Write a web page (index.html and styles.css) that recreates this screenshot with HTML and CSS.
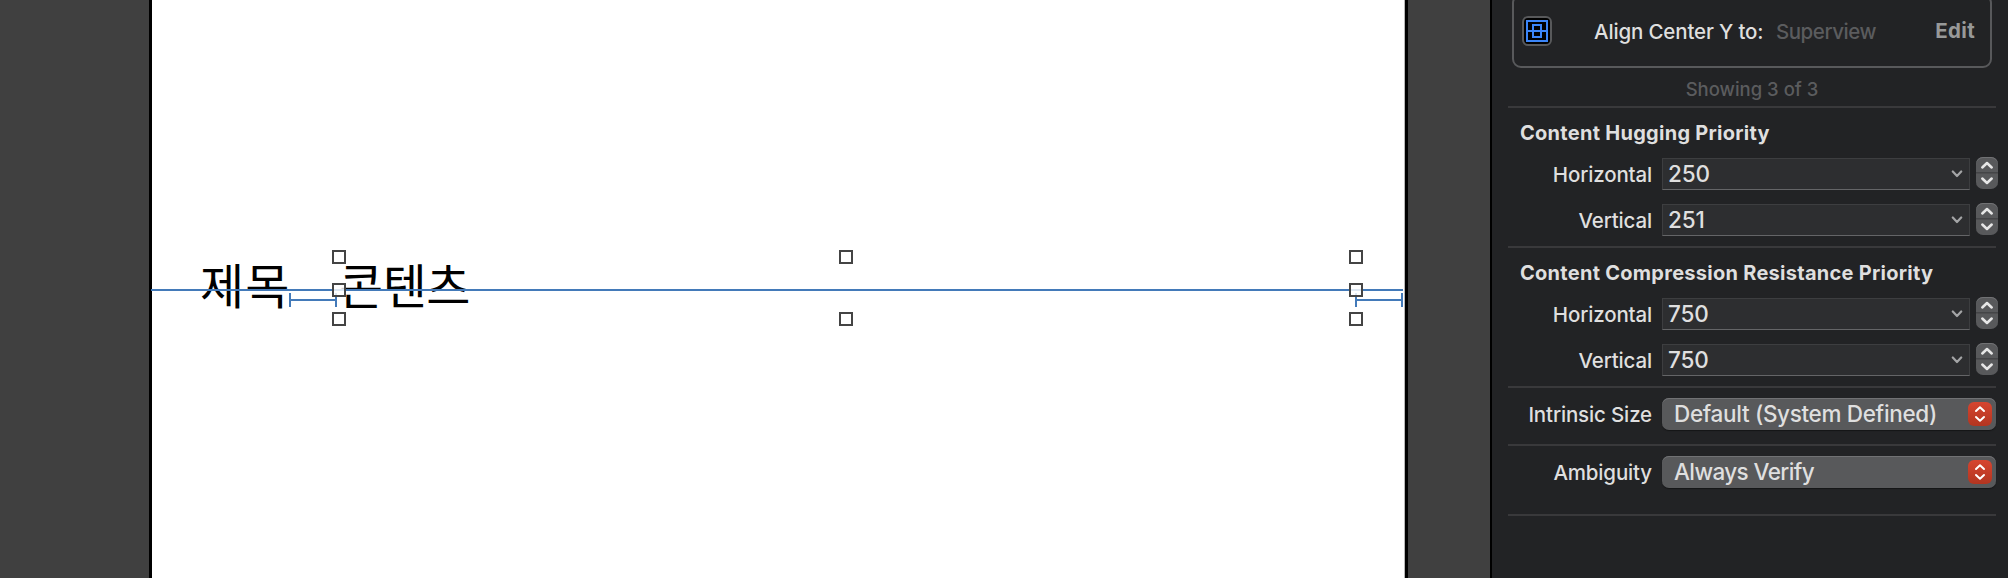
FILE: index.html
```html
<!DOCTYPE html>
<html lang="ko">
<head>
<meta charset="utf-8">
<title>Size Inspector</title>
<link rel="stylesheet" href="styles.css">
</head>
<body>
<svg class="defs" width="0" height="0">
  <symbol id="stepper" viewBox="0 0 22 32">
    <path d="M0 15.700h22" stroke="#444547" stroke-width="1.600"/>
    <path d="M6.300 10.500 11 6l4.700 4.500M6.300 21.500 11 26l4.700-4.500" fill="none" stroke="#e6e6e6" stroke-width="2.500" stroke-linecap="round" stroke-linejoin="round"/>
  </symbol>
  <symbol id="chevron" viewBox="0 0 12 8">
    <path d="M1.800 1.500 6 6l4.200-4.500" fill="none" stroke="#a4a5a6" stroke-width="2.200" stroke-linecap="round" stroke-linejoin="round"/>
  </symbol>
  <symbol id="updown" viewBox="0 0 24 24">
    <path d="M8 9 12 5.200 16 9M8 15l4 3.800L16 15" fill="none" stroke="#fff" stroke-width="2" stroke-linecap="round" stroke-linejoin="round"/>
  </symbol>
</svg>
<div class="app">
  <main class="canvas">
    <div class="device">
      <span class="label title">제목</span>
      <span class="label content">콘텐츠</span>
      <i class="guide"></i>
      <i class="spacing s1"></i>
      <i class="spacing s2"></i>
      <i class="handle left top"></i><i class="handle left middle"></i><i class="handle left bottom"></i>
      <i class="handle center top"></i><i class="handle center bottom"></i>
      <i class="handle right top"></i><i class="handle right middle"></i><i class="handle right bottom"></i>
    </div>
  </main>
  <aside class="inspector">
    <div class="constraint">
      <svg class="align-icon" viewBox="0 0 30 30" width="30" height="30">
        <rect x="1" y="1" width="28" height="28" rx="5" fill="#000" stroke="#58595b" stroke-width="2"/>
        <path d="M5 5h20v20H5zM11 9h8v12h-8zM5 15h20" fill="none" stroke="#3b85f7" stroke-width="2"/>
      </svg>
      <span class="name">Align Center Y to:</span>
      <span class="target">Superview</span>
      <span class="edit">Edit</span>
    </div>
    <div class="showing"><span>Showing 3 of 3</span></div>
    <section class="group">
      <h2>Content Hugging Priority</h2>
      <div class="row"><label>Horizontal</label><div class="field"><span>250</span><svg width="12" height="8"><use href="#chevron"/></svg></div><svg class="stepper"><use href="#stepper"/></svg></div>
      <div class="row"><label>Vertical</label><div class="field"><span>251</span><svg width="12" height="8"><use href="#chevron"/></svg></div><svg class="stepper"><use href="#stepper"/></svg></div>
    </section>
    <section class="group">
      <h2>Content Compression Resistance Priority</h2>
      <div class="row"><label>Horizontal</label><div class="field"><span>750</span><svg width="12" height="8"><use href="#chevron"/></svg></div><svg class="stepper"><use href="#stepper"/></svg></div>
      <div class="row"><label>Vertical</label><div class="field"><span>750</span><svg width="12" height="8"><use href="#chevron"/></svg></div><svg class="stepper"><use href="#stepper"/></svg></div>
    </section>
    <section class="group single">
      <div class="row"><label>Intrinsic Size</label><div class="popup"><span class="wide">Default (System Defined)</span><svg class="knob"><use href="#updown"/></svg></div></div>
    </section>
    <section class="group single ambiguity">
      <div class="row"><label>Ambiguity</label><div class="popup"><span>Always Verify</span><svg class="knob"><use href="#updown"/></svg></div></div>
    </section>
    <div class="end"></div>
  </aside>
</div>
</body>
</html>
```
FILE: styles.css
```css
* { box-sizing: border-box; }
html, body { height: 578px; overflow: hidden; }
body { margin: 0; background: #404040; font-family: Inter, "Liberation Sans", sans-serif; }
.defs { position: absolute; }
.app { display: flex; width: 2008px; height: 578px; overflow: hidden; }
.canvas { width: 1490px; padding-left: 149px; background: #404040; }
.device { position: relative; width: 1259px; height: 578px; background: #fff; border: solid #000; border-width: 0 3px; box-shadow: inset -1px 0 #b8b8b8; }

.label { position: absolute; top: 249px; font: 400 48px/68px "Noto Sans CJK KR", sans-serif; color: #000; white-space: nowrap; }
.title { left: 48px; letter-spacing: 1px; }
.content { left: 187px; letter-spacing: -0.5px; }
.guide { position: absolute; left: -1px; top: 289px; width: 1252px; height: 2px; background: #437ab9; }
.spacing { position: absolute; top: 293px; height: 14px; border: solid #437ab9; border-width: 0 2px; background: linear-gradient(#437ab9, #437ab9) 0 6px / 100% 2px no-repeat; }
.s1 { left: 137px; width: 48px; }
.s2 { left: 1203px; width: 48px; }
.handle { position: absolute; width: 14px; height: 14px; border: 2px solid #444; background: rgba(255, 255, 255, .82); }
.top { top: 250px; }
.middle { top: 283px; }
.bottom { top: 312px; }
.left { left: 180px; }
.center { left: 687px; }
.right { left: 1196.500px; }

.inspector { width: 518px; padding: 0 12px 0 16px; border-left: 2px solid #000; background: #222325; color: #dfdfdf; font-size: 20.500px; font-weight: 500; letter-spacing: -0.15px; white-space: nowrap; overflow: hidden; }
.constraint { display: flex; align-items: center; width: 480px; height: 74px; margin: -6px 0 0 4px; padding: 0 15px 0 8px; border: 2px solid #58595b; border-radius: 9px; }
.align-icon { margin-right: 42px; }
.name { margin-right: 12.500px; }
.target { color: #5b5c5e; letter-spacing: -0.450px; }
.edit { margin-left: auto; margin-top: -1px; font-weight: 700; letter-spacing: 0.300px; color: #989999; }
.showing { height: 38px; text-align: center; font-size: 18.500px; line-height: 43px; letter-spacing: 0; color: #5b5c5e; }
.group { width: 488px; height: 140px; border-top: 2px solid #39393b; }
h2 { height: 50px; margin: 0 0 0 12px; font-size: 20px; line-height: 50px; font-weight: 700; letter-spacing: 0.270px; }
.row { display: flex; align-items: center; width: 490px; height: 32px; margin-bottom: 14px; }
.row label { width: 144px; margin-right: 10px; text-align: right; }
.field { display: flex; align-items: center; justify-content: space-between; width: 308px; height: 32px; padding: 0 6px 0 5px; font-size: 22.500px; background: #2d2e30; border: 1px solid #3d3e40; border-bottom-color: #646567; }
.stepper { width: 22px; height: 32px; margin: -2px 0 0 6px; border-radius: 7px; background: #58595b; box-shadow: inset 0 1px #717274; }
.single { height: 58px; padding-top: 10px; }
.ambiguity { height: 70px; }
.popup { display: flex; align-items: center; justify-content: space-between; width: 334px; height: 32px; padding: 0 4px 0 12px; border-radius: 7px; background: #58595b; box-shadow: inset 0 1px #717274, 0 1px 1px #151617; font-size: 22.500px; letter-spacing: -0.600px; }
.popup .wide { letter-spacing: -0.330px; }
.knob { width: 24px; height: 24px; border-radius: 6px; background: linear-gradient(#d64530, #b23520); }
.field span, .popup span { margin-top: -1px; }
.end { width: 488px; height: 2px; background: #39393b; }
```
